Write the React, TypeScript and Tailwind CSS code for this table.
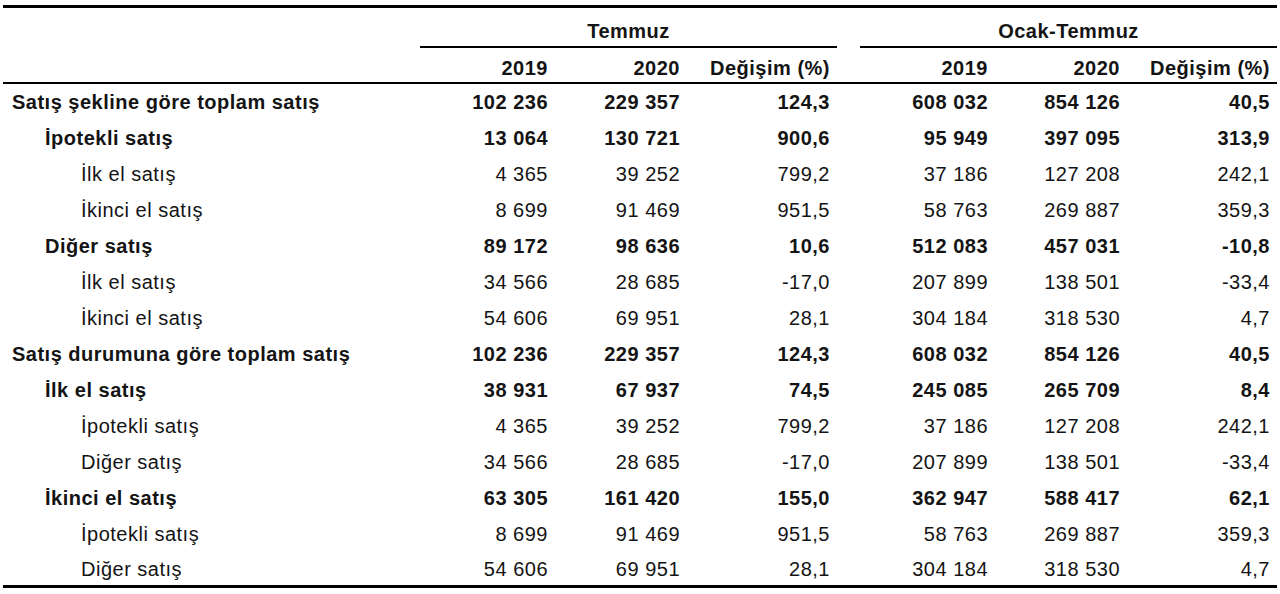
type Row = {
  label: string;
  level: 0 | 1 | 2;
  values: string[];
};

const ROWS: Row[] = [
  { label: "Satış şekline göre toplam satış", level: 0, values: ["102 236", "229 357", "124,3", "608 032", "854 126", "40,5"] },
  { label: "İpotekli satış", level: 1, values: ["13 064", "130 721", "900,6", "95 949", "397 095", "313,9"] },
  { label: "İlk el satış", level: 2, values: ["4 365", "39 252", "799,2", "37 186", "127 208", "242,1"] },
  { label: "İkinci el satış", level: 2, values: ["8 699", "91 469", "951,5", "58 763", "269 887", "359,3"] },
  { label: "Diğer satış", level: 1, values: ["89 172", "98 636", "10,6", "512 083", "457 031", "-10,8"] },
  { label: "İlk el satış", level: 2, values: ["34 566", "28 685", "-17,0", "207 899", "138 501", "-33,4"] },
  { label: "İkinci el satış", level: 2, values: ["54 606", "69 951", "28,1", "304 184", "318 530", "4,7"] },
  { label: "Satış durumuna göre toplam satış", level: 0, values: ["102 236", "229 357", "124,3", "608 032", "854 126", "40,5"] },
  { label: "İlk el satış", level: 1, values: ["38 931", "67 937", "74,5", "245 085", "265 709", "8,4"] },
  { label: "İpotekli satış", level: 2, values: ["4 365", "39 252", "799,2", "37 186", "127 208", "242,1"] },
  { label: "Diğer satış", level: 2, values: ["34 566", "28 685", "-17,0", "207 899", "138 501", "-33,4"] },
  { label: "İkinci el satış", level: 1, values: ["63 305", "161 420", "155,0", "362 947", "588 417", "62,1"] },
  { label: "İpotekli satış", level: 2, values: ["8 699", "91 469", "951,5", "58 763", "269 887", "359,3"] },
  { label: "Diğer satış", level: 2, values: ["54 606", "69 951", "28,1", "304 184", "318 530", "4,7"] },
];

// label | 2019 | 2020 | değişim | gap | 2019 | 2020 | değişim
const GRID = "grid grid-cols-[417px_135px_132px_150px_23px_135px_132px_150px]";

const INDENT = ["pl-[9px]", "pl-[42px]", "pl-[78px]"];

function NumCell({ value }: { value: string }) {
  return <div className="flex items-center justify-end pr-[7px]">{value}</div>;
}

export default function App() {
  return (
    <div
      className="h-[594px] bg-white pt-[5px] pl-[3px] text-[20px] tracking-[0.5px] text-[#141414]"
      style={{ fontFamily: '"Liberation Sans", Arial, sans-serif' }}
    >
      <div className="w-[1274px] border-y-[3px] border-black">
        {/* period header */}
        <div className={`${GRID} h-[38px] font-bold`}>
          <div />
          <div className="col-span-3 flex items-center justify-center border-b-2 border-black pt-[8px]">
            Temmuz
          </div>
          <div />
          <div className="col-span-3 flex items-center justify-center border-b-2 border-black pt-[8px]">
            Ocak-Temmuz
          </div>
        </div>

        {/* year header */}
        <div className={`${GRID} h-[38px] border-b-2 border-black pt-[7px] font-bold`}>
          <div />
          <NumCell value="2019" />
          <NumCell value="2020" />
          <NumCell value="Değişim (%)" />
          <div />
          <NumCell value="2019" />
          <NumCell value="2020" />
          <NumCell value="Değişim (%)" />
        </div>

        {ROWS.map((row, i) => {
          const bold = row.level < 2;
          const last = i === ROWS.length - 1;
          return (
            <div
              key={i}
              className={`${GRID} ${last ? "h-[33px]" : "h-[36px]"} ${bold ? "font-bold" : ""}`}
            >
              <div className={`flex items-center whitespace-nowrap ${INDENT[row.level]}`}>
                {row.label}
              </div>
              <NumCell value={row.values[0]} />
              <NumCell value={row.values[1]} />
              <NumCell value={row.values[2]} />
              <div />
              <NumCell value={row.values[3]} />
              <NumCell value={row.values[4]} />
              <NumCell value={row.values[5]} />
            </div>
          );
        })}
      </div>
    </div>
  );
}
